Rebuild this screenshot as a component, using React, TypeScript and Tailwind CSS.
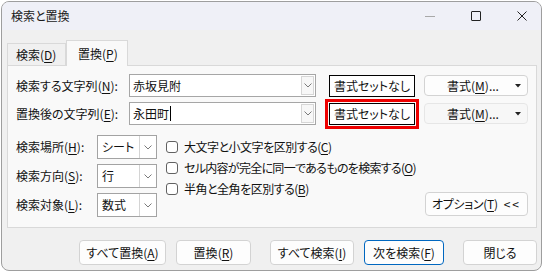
import React from "react";

const Key: React.FC<{ k: string }> = ({ k }) => (
  <>
    (<span className="underline underline-offset-[2px] decoration-1">{k}</span>)
  </>
);

const Chevron: React.FC = () => (
  <svg width="8" height="5" viewBox="0 0 8 5" fill="none">
    <path d="M0.5 0.5 L4 4 L7.5 0.5" stroke="#7a7a7a" strokeWidth="1" />
  </svg>
);

const Caret: React.FC = () => (
  <svg width="6" height="4" viewBox="0 0 6 4" className="ml-auto">
    <path d="M0 0 H6 L3 3.5 Z" fill="#222" />
  </svg>
);

const Checkbox: React.FC<{ label: string; k: string; tight?: boolean }> = ({ label, k, tight }) => (
  <div className="flex items-center h-[21px]">
    <div className="w-[12px] h-[12px] rounded-[3px] border border-[#616161] bg-white" />
    <span className={"ml-[6px] " + (tight ? "tracking-[-0.7px]" : "tracking-[-0.5px]")}>
      {label}
      <Key k={k} />
    </span>
  </div>
);

const SmallCombo: React.FC<{ value: string }> = ({ value }) => (
  <div className="w-[60px] h-[24px] border border-[#a3a3a3] bg-white flex items-stretch">
    <div className="flex-1 flex items-center pl-[4px]">{value}</div>
    <div className="w-[17px] border-l border-[#d4d4d4] flex items-center justify-center">
      <Chevron />
    </div>
  </div>
);

const Btn: React.FC<{ children: React.ReactNode; w: string; primary?: boolean }> = ({
  children,
  w,
  primary,
}) => (
  <div
    className={
      "h-[25px] rounded-[4px] bg-[#fdfdfd] border flex items-center justify-center " +
      w +
      (primary ? " border-[#0067c0]" : " border-[#d3d3d3]")
    }
  >
    {children}
  </div>
);

const App: React.FC = () => {
  return (
    <div className="w-[544px] h-[273px] bg-white overflow-hidden pt-px pl-px whitespace-nowrap font-['Noto_Sans_CJK_JP','Noto_Sans',sans-serif] [font-feature-settings:'palt'] text-[12px] text-[#111]">
      <div className="w-[541px] h-[270px] rounded-[8px] border border-[#9e9e9e] bg-[#f0f0f0] overflow-hidden flex flex-col">
        {/* title bar */}
        <div className="h-[28px] shrink-0 bg-[#eff0f7] flex items-center pl-[9px]">
          <span className="text-[#1a1a1a]">検索と置換</span>
          <div className="ml-auto mr-[14px] flex items-center gap-[36px]">
            <div className="w-[10px] h-px bg-[#a8a8a8]" />
            <div className="w-[10px] h-[10px] border border-[#222] rounded-[1px]" />
            <svg width="10" height="10" viewBox="0 0 10 10">
              <path d="M0.5 0.5 L9.5 9.5 M9.5 0.5 L0.5 9.5" stroke="#222" strokeWidth="1" />
            </svg>
          </div>
        </div>

        <div className="pt-[10px] pl-[5px]">
          {/* tabs */}
          <div className="flex items-end h-[25px] relative z-10">
            <div className="w-[59px] h-[22px] border border-b-0 border-[#d9d9d9] bg-[#f0f0f0] flex items-center pl-[8px]">
              検索<Key k="D" />
            </div>
            <div className="w-[62px] h-[26px] -mb-px border border-b-0 border-[#d9d9d9] bg-[#f9f9f9] flex items-center pl-[11px]">
              置換<Key k="P" />
            </div>
          </div>

          {/* panel */}
          <div className="w-[530px] h-[163px] border border-[#d9d9d9] bg-[#f9f9f9] pt-[8px] pl-[8px]">
            <div className="flex items-center h-[23px]">
              <div className="w-[113px]">
                検索する文字列<Key k="N" />:
              </div>
              <div className="w-[187px] h-[23px] border border-[#a6a6a6] bg-white flex items-stretch">
                <div className="flex-1 flex items-center pl-[3px]">赤坂見附</div>
                <div className="w-[13px] my-px mr-px border border-[#d6d6d6] bg-[#f7f7f7] flex items-center justify-center">
                  <Chevron />
                </div>
              </div>
              <div className="ml-[13px] w-[86px] h-[22px] border border-black bg-white flex items-center justify-center">
                書式セットなし
              </div>
              <div className="ml-[9px] w-[104px] h-[21px] rounded-[4px] border border-[#d3d3d3] bg-[#fdfdfd] flex items-center pl-[22px] pr-[6px]">
                <span>
                  書式<Key k="M" />...
                </span>
                <Caret />
              </div>
            </div>

            <div className="flex items-center h-[23px] mt-[5px]">
              <div className="w-[113px]">
                置換後の文字列<Key k="E" />:
              </div>
              <div className="w-[187px] h-[23px] border border-[#a6a6a6] bg-white flex items-stretch">
                <div className="flex-1 flex items-center pl-[3px]">
                  永田町
                  <span className="w-px h-[15px] bg-black ml-px" />
                </div>
                <div className="w-[13px] my-px mr-px border border-[#d6d6d6] bg-[#f7f7f7] flex items-center justify-center">
                  <Chevron />
                </div>
              </div>
              <div className="ml-[13px] w-[86px] h-[22px] border border-black bg-white flex items-center justify-center outline-[3px] outline-solid outline-[#ee0000] outline-offset-[1px]">
                書式セットなし
              </div>
              <div className="ml-[9px] w-[104px] h-[21px] rounded-[4px] border border-[#e6e6e6] bg-[#f7f7f7] flex items-center pl-[22px] pr-[6px]">
                <span>
                  書式<Key k="M" />...
                </span>
                <Caret />
              </div>
            </div>

            <div className="flex mt-[10px]">
              <div className="grid grid-cols-[81px_60px] gap-y-[5px]">
                <div className="flex items-center">
                  検索場所<Key k="H" />:
                </div>
                <SmallCombo value="シート" />
                <div className="flex items-center">
                  検索方向<Key k="S" />:
                </div>
                <SmallCombo value="行" />
                <div className="flex items-center">
                  検索対象<Key k="L" />:
                </div>
                <SmallCombo value="数式" />
              </div>

              <div className="ml-[9px] pt-px flex flex-col">
                <Checkbox label="大文字と小文字を区別する" k="C" />
                <Checkbox label="セル内容が完全に同一であるものを検索する" k="O" tight />
                <Checkbox label="半角と全角を区別する" k="B" />
              </div>

              <div className="ml-auto mr-[8px] self-end mb-px w-[103px] h-[24px] rounded-[4px] border border-[#d3d3d3] bg-[#fdfdfd] flex items-center justify-center">
                <span className="tracking-[-0.3px]">
                  オプション<Key k="T" />
                </span>
                <span className="ml-[6px] tracking-[2px]">&lt;&lt;</span>
              </div>
            </div>
          </div>
        </div>

        {/* bottom buttons */}
        <div className="flex mt-[12px] ml-[77px]">
          <Btn w="w-[87px]">
            すべて置換<Key k="A" />
          </Btn>
          <div className="ml-[10px]">
            <Btn w="w-[75px]">
              置換<Key k="R" />
            </Btn>
          </div>
          <div className="ml-[19px]">
            <Btn w="w-[84px]">
              すべて検索<Key k="I" />
            </Btn>
          </div>
          <div className="ml-[10px]">
            <Btn w="w-[80px]" primary>
              次を検索<Key k="F" />
            </Btn>
          </div>
          <div className="ml-[19px]">
            <Btn w="w-[74px]">閉じる</Btn>
          </div>
        </div>
      </div>
    </div>
  );
};

export default App;
